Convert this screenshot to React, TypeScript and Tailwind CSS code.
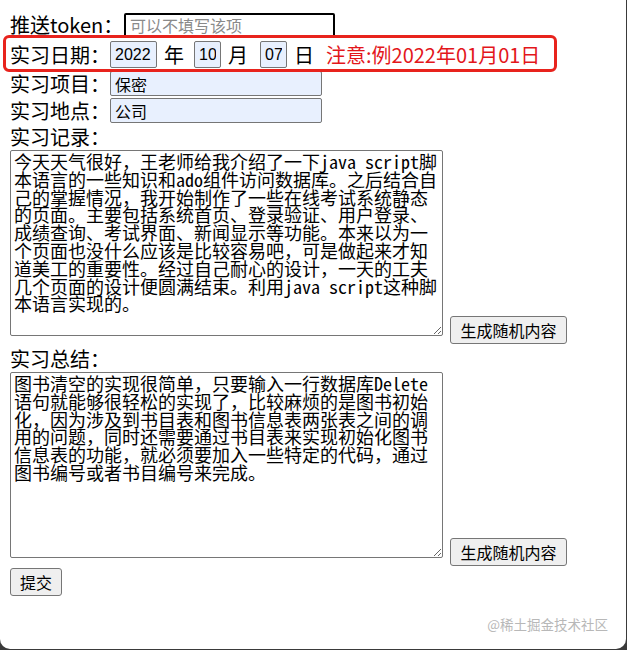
import * as React from "react";

const record = [
  "今天天气很好，王老师给我介绍了一下java script脚",
  "本语言的一些知识和ado组件访问数据库。之后结合自",
  "己的掌握情况，我开始制作了一些在线考试系统静态",
  "的页面。主要包括系统首页、登录验证、用户登录、",
  "成绩查询、考试界面、新闻显示等功能。本来以为一",
  "个页面也没什么应该是比较容易吧，可是做起来才知",
  "道美工的重要性。经过自己耐心的设计，一天的工夫",
  "几个页面的设计便圆满结束。利用java script这种脚",
  "本语言实现的。",
].join("\n");

const summary = [
  "图书清空的实现很简单，只要输入一行数据库Delete",
  "语句就能够很轻松的实现了，比较麻烦的是图书初始",
  "化，因为涉及到书目表和图书信息表两张表之间的调",
  "用的问题，同时还需要通过书目表来实现初始化图书",
  "信息表的功能，就必须要加入一些特定的代码，通过",
  "图书编号或者书目编号来完成。",
].join("\n");

const sans = "font-['Noto_Sans_CJK_SC','Noto_Sans',sans-serif]";
const field =
  "h-[25px] w-[212px] rounded-[2px] border border-[#767676] bg-[#e8f0fe] px-[4px] text-[16px] text-black outline-none font-['Liberation_Sans','Noto_Sans_CJK_SC',sans-serif]";
const dateField =
  "h-[27px] rounded-[2px] border border-[#767676] bg-[#e8f0fe] px-[4px] text-[16px] text-black outline-none font-['Liberation_Sans','Noto_Sans_CJK_SC',sans-serif]";
const area =
  "block h-[186px] w-[433px] rounded-[2px] border border-[#767676] bg-white px-[3px] py-[2px] text-[18px] leading-[17.8px] text-black outline-none font-['Noto_Sans_Mono_CJK_SC','Noto_Sans_CJK_SC',monospace]";
const btn =
  "rounded-[3px] border border-[#767676] bg-[#efefef] text-[16px] leading-none text-black font-['Noto_Sans_CJK_SC',sans-serif]";

function Entry({ text }: { text: string }) {
  const [value, setValue] = React.useState(text);
  return (
    <div className="flex items-end">
      <textarea className={area} value={value} onChange={(e) => setValue(e.target.value)} />
      <button
        className={`${btn} ml-[7px] h-[28px] w-[117px] translate-y-[8px]`}
        onClick={() => setValue(text)}
      >
        生成随机内容
      </button>
    </div>
  );
}

export default function App() {
  return (
    <div className="h-[650px] w-[627px] bg-[#3a3a3a]">
      <div className={`relative h-[649px] w-[626px] rounded-b-[10px] bg-white pl-[10px] pt-[11px] text-[20px] text-black ${sans}`}>
        <div className="flex h-[28px] items-center">
          <span className="w-[114px] leading-none">推送token：</span>
          <input
            className="h-[24px] w-[211px] rounded-[2px] border-2 border-black px-[4px] text-[16px] outline-none placeholder:text-[#8a8a8a]"
            placeholder="可以不填写该项"
          />
        </div>

        <div className="flex h-[31px] items-center">
          <span className="w-[100px] leading-none">实习日期：</span>
          <input className={`${dateField} w-[47px]`} defaultValue="2022" />
          <span className="ml-[7px] mr-[10px] leading-none">年</span>
          <input className={`${dateField} w-[27px]`} defaultValue="10" />
          <span className="ml-[7px] mr-[12px] leading-none">月</span>
          <input className={`${dateField} w-[27px]`} defaultValue="07" />
          <span className="ml-[7px] mr-[12px] leading-none">日</span>
          <span className="leading-none text-[#e3161b]">注意:例2022年01月01日</span>
        </div>

        <div className="flex h-[27px] items-center">
          <span className="w-[100px] leading-none">实习项目：</span>
          <input className={field} defaultValue="保密" />
        </div>
        <div className="flex h-[27px] items-center">
          <span className="w-[100px] leading-none">实习地点：</span>
          <input className={field} defaultValue="公司" />
        </div>

        <div className="flex h-[26px] items-center leading-none">实习记录：</div>
        <Entry text={record} />

        <div className="mt-[10px] flex h-[26px] items-center leading-none">实习总结：</div>
        <Entry text={summary} />

        <button className={`${btn} mt-[10px] h-[28px] w-[52px]`}>提交</button>

        {/* annotation frame drawn over the date row */}
        <div className="pointer-events-none absolute left-[3px] top-[35px] h-[37px] w-[554px] rounded-[6px] border-[3px] border-[#e8231d]" />

        <div className="absolute bottom-[18px] right-[18px] text-[13.5px] leading-none text-[#b8b8b8]">
          @稀土掘金技术社区
        </div>
      </div>
    </div>
  );
}
